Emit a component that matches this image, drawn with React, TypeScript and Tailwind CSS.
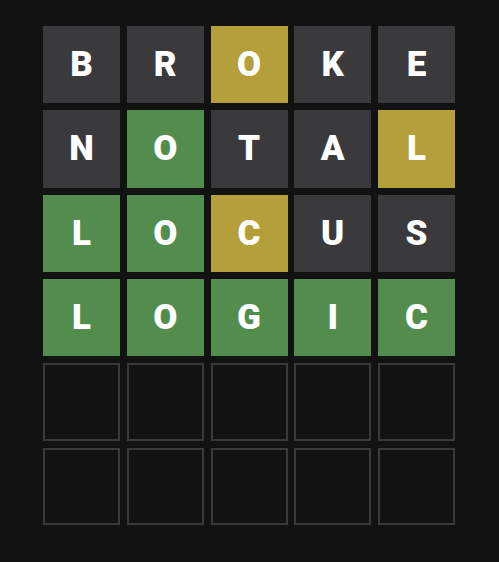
import React from "react";

type S = "a" | "p" | "c" | "e";
const rows: [string, S][][] = [
  [["B","a"],["R","a"],["O","p"],["K","a"],["E","a"]],
  [["N","a"],["O","c"],["T","a"],["A","a"],["L","p"]],
  [["L","c"],["O","c"],["C","p"],["U","a"],["S","a"]],
  [["L","c"],["O","c"],["G","c"],["I","c"],["C","c"]],
  [["","e"],["","e"],["","e"],["","e"],["","e"]],
  [["","e"],["","e"],["","e"],["","e"],["","e"]],
];

const cls: Record<S, string> = {
  a: "bg-[#3a3a3c]",
  p: "bg-[#b59f3b]",
  c: "bg-[#538d4e]",
  e: "border-2 border-[#3a3a3c]",
};

export default function App() {
  return (
    <div className="w-[499px] h-[562px] bg-[#121212] pt-[26px] pl-[43px]">
      <div className="grid grid-cols-5 grid-rows-6 gap-x-[6.75px] gap-y-[7px] w-[412px] h-[499px]">
        {rows.flat().map(([l, s], i) => (
          <div
            key={i}
            className={`${cls[s]} flex items-center justify-center text-white font-black text-[35px] leading-none`}
            style={{ fontFamily: 'Roboto, "Liberation Sans", sans-serif' }}
          >
            {l}
          </div>
        ))}
      </div>
    </div>
  );
}
